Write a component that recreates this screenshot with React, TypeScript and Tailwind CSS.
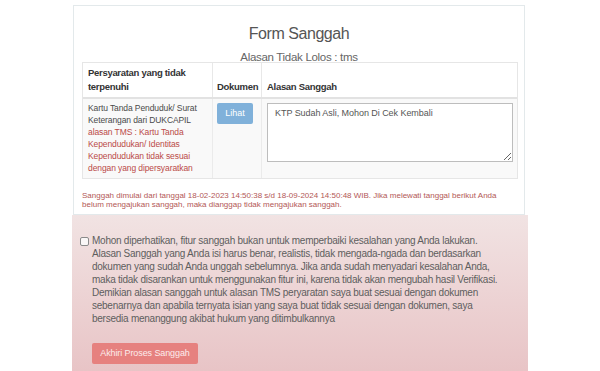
import React from "react";

const font = { fontFamily: '"Liberation Sans", Arial, sans-serif' };

export default function App() {
  return (
    <div className="w-[600px] h-[371px] bg-white overflow-hidden flex flex-col" style={font}>
      {/* Panel */}
      <div className="ml-[73px] mt-[5px] w-[452px] border border-[#e3e9eb] bg-white pt-[17px] pb-[5px]">
        <div className="text-center text-[16px] leading-[22px] tracking-[-0.45px] text-[#555]">Form Sanggah</div>
        <div className="mt-[6px] text-center text-[11.5px] leading-[12px] tracking-[-0.3px] text-[#666]">Alasan Tidak Lolos : tms</div>

        {/* Table */}
        <div className="ml-[8px] mt-[-1px] w-[436px] border border-[#e6e6e6]">
          <div className="grid grid-cols-[130px_49px_255px] h-[36px] border-b-2 border-[#e2e2e2] text-[9.5px] leading-[14px] font-bold tracking-[-0.3px] text-[#333]">
            <div className="flex items-end pb-[3px] px-[5px] border-r border-[#e8e8e8]">
              <div>Persyaratan yang tidak<br />terpenuhi</div>
            </div>
            <div className="flex items-end pb-[3px] px-[4px] border-r border-[#e8e8e8]">Dokumen</div>
            <div className="flex items-end pb-[3px] px-[5px]">Alasan Sanggah</div>
          </div>
          <div className="grid grid-cols-[130px_49px_255px] bg-[#f9f9f9]">
            <div className="pt-[3px] pb-[4px] px-[5px] border-r border-[#ebebeb] text-[8.5px] leading-[12px] tracking-[-0.1px]">
              <div className="text-[#4a4a4a]">Kartu Tanda Penduduk/ Surat<br />Keterangan dari DUKCAPIL</div>
              <div className="text-[#b94a48]">alasan TMS : Kartu Tanda<br />Kependudukan/ Identitas<br />Kependudukan tidak sesuai<br />dengan yang dipersyaratkan</div>
            </div>
            <div className="pt-[4px] pl-[4px] border-r border-[#ebebeb]">
              <div className="w-[36px] h-[21px] rounded-[2px] bg-[#80b1da] text-white text-[9px] flex items-center justify-center">Lihat</div>
            </div>
            <div className="pt-[4px] pl-[5px]">
              <textarea
                readOnly
                defaultValue="KTP Sudah Asli, Mohon Di Cek Kembali"
                className="block w-[246px] h-[59px] border border-[#bdbdbd] bg-white px-[7px] py-[3px] text-[9px] leading-[12px] tracking-[-0.05px] text-[#555] outline-none resize"
                style={font}
              />
            </div>
          </div>
        </div>

        <div className="ml-[8px] mt-[12px] text-[8px] leading-[9px] text-[#b35856] whitespace-nowrap">
          Sanggah dimulai dari tanggal 18-02-2023 14:50:38 s/d 18-09-2024 14:50:48 WIB. Jika melewati tanggal berikut Anda
          <br />
          belum mengajukan sanggah, maka dianggap tidak mengajukan sanggah.
        </div>
      </div>

      {/* Pink confirmation area */}
      <div className="ml-[72px] w-[456px] flex-1 bg-gradient-to-b from-[#f1e3e3] to-[#e8c4c6] pt-[19px] pl-[8px]">
        <div className="flex items-start">
          <div className="mt-[3px] w-[9px] h-[9px] rounded-[2px] border border-[#8a8a8a] bg-[#faf7f7] shrink-0" />
          <div className="ml-[3px] text-[10px] leading-[13px] tracking-[-0.25px] text-[#5e5e5e] whitespace-nowrap">
            Mohon diperhatikan, fitur sanggah bukan untuk memperbaiki kesalahan yang Anda lakukan.<br />
            Alasan Sanggah yang Anda isi harus benar, realistis, tidak mengada-ngada dan berdasarkan<br />
            dokumen yang sudah Anda unggah sebelumnya. Jika anda sudah menyadari kesalahan Anda,<br />
            maka tidak disarankan untuk menggunakan fitur ini, karena tidak akan mengubah hasil Verifikasi.<br />
            Demikian alasan sanggah untuk alasan TMS peryaratan saya buat sesuai dengan dokumen<br />
            sebenarnya dan apabila ternyata isian yang saya buat tidak sesuai dengan dokumen, saya<br />
            bersedia menanggung akibat hukum yang ditimbulkannya
          </div>
        </div>
        <div className="ml-[12px] mt-[18px] w-[106px] h-[21px] rounded-[2px] bg-[#e6817f] text-[#fcecec] text-[9px] tracking-[-0.1px] flex items-center justify-center">
          Akhiri Proses Sanggah
        </div>
      </div>
    </div>
  );
}
